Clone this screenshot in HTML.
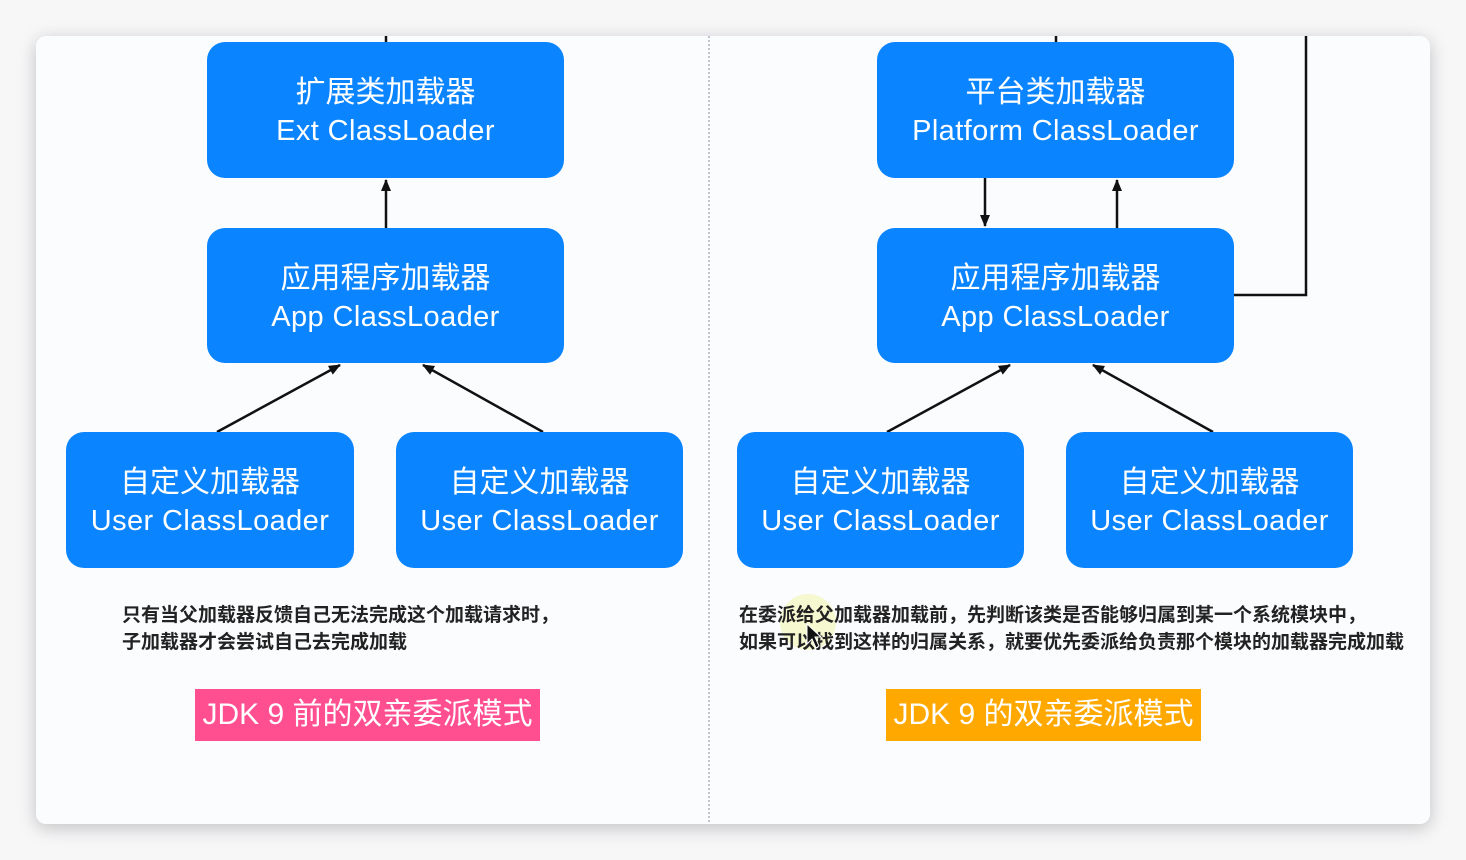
<!DOCTYPE html>
<html><head><meta charset="utf-8"><style>
html,body{margin:0;padding:0;width:1466px;height:860px;background:#f7f7f8;overflow:hidden;font-family:"Liberation Sans","Noto Sans CJK SC",sans-serif}
.card{position:absolute;left:36px;top:36px;width:1394px;height:788px;background:#fbfcfe;border-radius:10px;box-shadow:0 4px 18px rgba(0,0,0,.22)}
.b{position:absolute;background:#0a84ff;border-radius:18px;color:#fff;text-align:center;font-size:30px;line-height:39px;display:flex;flex-direction:column;justify-content:center;padding-top:4px;box-sizing:border-box}
.b span{letter-spacing:0.4px;font-size:29px}
.n{position:absolute;font-size:19px;font-weight:bold;color:#222;line-height:27px;white-space:nowrap}
.l{position:absolute;color:#fff;font-size:30px;line-height:52px;text-align:center}
svg{position:absolute;left:0;top:0}
</style></head><body>
<div class="card"></div>
<svg width="1466" height="860">
<defs>
<marker id="h" markerWidth="12" markerHeight="12" refX="11" refY="6" orient="auto" markerUnits="userSpaceOnUse"><path d="M0,1 L12,6 L0,11z" fill="#111"/></marker></defs>
<line x1="709" y1="36" x2="709" y2="824" stroke="#889" stroke-width="1" stroke-dasharray="2,2"/>
<g stroke="#111" stroke-width="2.5" fill="none">
<line x1="386" y1="36" x2="386" y2="42"/>
<line x1="386" y1="228" x2="386" y2="180" marker-end="url(#h)"/>
<line x1="217" y1="432" x2="340" y2="365" marker-end="url(#h)"/>
<line x1="543" y1="432" x2="423" y2="365" marker-end="url(#h)"/>
<line x1="1056" y1="36" x2="1056" y2="42"/>
<line x1="985" y1="178" x2="985" y2="226" marker-end="url(#h)"/>
<line x1="1117" y1="228" x2="1117" y2="180" marker-end="url(#h)"/>
<polyline points="1234,295 1306,295 1306,36"/>
<line x1="887" y1="432" x2="1010" y2="365" marker-end="url(#h)"/>
<line x1="1213" y1="432" x2="1093" y2="365" marker-end="url(#h)"/>
</g>
<circle cx="808" cy="622" r="28" fill="#f3f5b0" opacity=".6"/>
</svg>
<div class="b" style="left:207px;top:42px;width:357px;height:136px">扩展类加载器<span>Ext ClassLoader</span></div>
<div class="b" style="left:207px;top:228px;width:357px;height:135px">应用程序加载器<span>App ClassLoader</span></div>
<div class="b" style="left:66px;top:432px;width:288px;height:136px">自定义加载器<span>User ClassLoader</span></div>
<div class="b" style="left:396px;top:432px;width:287px;height:136px">自定义加载器<span>User ClassLoader</span></div>
<div class="b" style="left:877px;top:42px;width:357px;height:136px">平台类加载器<span>Platform ClassLoader</span></div>
<div class="b" style="left:877px;top:228px;width:357px;height:135px">应用程序加载器<span>App ClassLoader</span></div>
<div class="b" style="left:737px;top:432px;width:287px;height:136px">自定义加载器<span>User ClassLoader</span></div>
<div class="b" style="left:1066px;top:432px;width:287px;height:136px">自定义加载器<span>User ClassLoader</span></div>
<div class="n" style="left:122px;top:602px">只有当父加载器反馈自己无法完成这个加载请求时，<br>子加载器才会尝试自己去完成加载</div>
<div class="n" style="left:739px;top:602px">在委派给父加载器加载前，先判断该类是否能够归属到某一个系统模块中，<br>如果可以找到这样的归属关系，就要优先委派给负责那个模块的加载器完成加载</div>
<div class="l" style="left:195px;top:689px;width:345px;background:#ff4f91">JDK 9 前的双亲委派模式</div>
<div class="l" style="left:886px;top:689px;width:315px;background:#ffa800">JDK 9 的双亲委派模式</div>
<svg width="1466" height="860" style="pointer-events:none"><path d="M807,624 L807,644 L812,639 L816,648 L819,646 L815,637 L821,637z" fill="#111" stroke="#fff" stroke-width="1"/></svg>
</body></html>
